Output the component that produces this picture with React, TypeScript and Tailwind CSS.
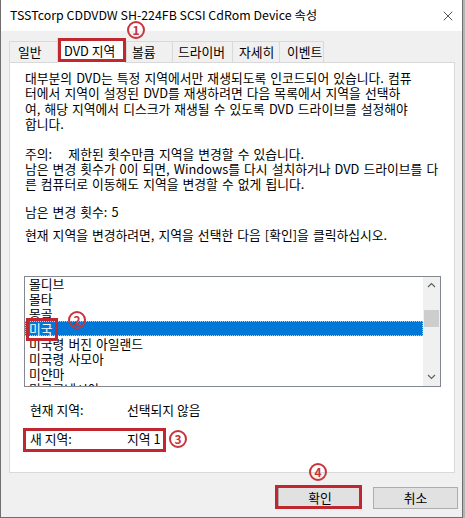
import { X } from 'lucide-react';

// Korean region list shown in the listbox
const regions = [
  '몰디브',
  '몰타',
  '몽골',
  '미국',
  '미국령 버진 아일랜드',
  '미국령 사모아',
  '미얀마',
  '미크로네시아',
];

const tabs = [
  { label: '일반', w: 'w-[48px]', pl: 'pl-[8px]' },
  { label: 'DVD 지역', w: 'w-[69px]', pl: 'pl-[6px]', active: true },
  { label: '볼륨', w: 'w-[46px]', pl: 'pl-[5px]' },
  { label: '드라이버', w: 'w-[60px]', pl: 'pl-[5px]' },
  { label: '자세히', w: 'w-[47px]', pl: 'pl-[6px]' },
  { label: '이벤트', w: 'w-[45px]', pl: 'pl-[7px]' },
];

function Badge({ n, className }: { n: string; className: string }) {
  return (
    <span
      className={`absolute flex items-center justify-center w-[18px] h-[18px] rounded-full border-2 border-[#c8343b] text-[#c8343b] text-[12px] font-bold leading-none ${className}`}
    >
      {n}
    </span>
  );
}

export default function App() {
  return (
    <div className="w-[465px] h-[518px] bg-[#b4b4b4] font-['Noto_Sans_CJK_KR',sans-serif] text-[12.8px] text-black">
      <div className="relative w-[463px] h-[518px] border-x border-b border-[#6e6e6e] bg-[#f0f0f0] flex flex-col">
        {/* Title bar */}
        <div className="h-[31px] bg-white flex items-center justify-between pl-[9px] pr-[6px]">
          <span className="whitespace-nowrap text-[12.4px]">TSSTcorp CDDVDW SH-224FB SCSI CdRom Device 속성</span>
          <X size={16} strokeWidth={1} className="text-black" />
        </div>

        <div className="px-[8px]">
          {/* Tabs */}
          <div className="mt-[7px] h-[24px] flex items-end relative z-10">
            {tabs.map((t) =>
              t.active ? (
                <div
                  key={t.label}
                  className={`${t.w} ${t.pl} h-[25px] -mb-px bg-white border-x border-t border-[#d9d9d9] flex items-center whitespace-nowrap`}
                >
                  {t.label}
                </div>
              ) : (
                <div
                  key={t.label}
                  className={`${t.w} ${t.pl} h-[21px] bg-[#f0f0f0] border-l border-t last:border-r border-[#d9d9d9] flex items-center whitespace-nowrap`}
                >
                  {t.label}
                </div>
              )
            )}
          </div>

          {/* Panel */}
          <div className="w-[446px] h-[411px] bg-white border border-[#d9d9d9] pt-[7px] pl-[15px] leading-[15.4px]">
            <div className="whitespace-nowrap [word-spacing:1.2px]">
              <div>대부분의 DVD는 특정 지역에서만 재생되도록 인코드되어 있습니다. 컴퓨</div>
              <div>터에서 지역이 설정된 DVD를 재생하려면 다음 목록에서 지역을 선택하</div>
              <div>여, 해당 지역에서 디스크가 재생될 수 있도록 DVD 드라이브를 설정해야</div>
              <div>합니다.</div>
            </div>
            <div className="whitespace-nowrap mt-[14px] [word-spacing:1.2px]">
              <div>주의:&nbsp;&nbsp;&nbsp;&nbsp;제한된 횟수만큼 지역을 변경할 수 있습니다.</div>
              <div>남은 변경 횟수가 0이 되면, Windows를 다시 설치하거나 DVD 드라이브를 다</div>
              <div>른 컴퓨터로 이동해도 지역을 변경할 수 없게 됩니다.</div>
            </div>
            <div className="mt-[12px] whitespace-nowrap [word-spacing:1.2px]">남은 변경 횟수: 5</div>
            <div className="mt-[8px] whitespace-nowrap [word-spacing:1.2px]">현재 지역을 변경하려면, 지역을 선택한 다음 [확인]을 클릭하십시오.</div>

            {/* Listbox */}
            <div className="mt-[33px] -ml-px w-[417px] h-[111px] border border-[#828790] flex leading-[15px]">
              <div className="flex-1 overflow-hidden">
                <div className="-mt-px">
                  {regions.map((r) =>
                    r === '미국' ? (
                      <div
                        key={r}
                        className="h-[15px] pl-[3px] bg-[#0078d7] text-white border border-dotted border-[#a8d0f2] leading-[13px] whitespace-nowrap"
                      >
                        {r}
                      </div>
                    ) : (
                      <div key={r} className="h-[15px] pl-[4px] whitespace-nowrap [word-spacing:1.2px]">
                        {r}
                      </div>
                    )
                  )}
                </div>
              </div>
              <div className="w-[17px] bg-[#f0f0f0] flex flex-col">
                <div className="h-[17px] flex items-center justify-center">
                  <svg width="9" height="6" viewBox="0 0 9 6">
                    <polyline points="1,5 4.5,1.5 8,5" fill="none" stroke="#606060" strokeWidth="1.2" />
                  </svg>
                </div>
                <div className="flex-1 pt-[16px] px-[1px]">
                  <div className="h-[17px] bg-[#cdcdcd]" />
                </div>
                <div className="h-[17px] flex items-center justify-center">
                  <svg width="9" height="6" viewBox="0 0 9 6">
                    <polyline points="1,1 4.5,4.5 8,1" fill="none" stroke="#606060" strokeWidth="1.2" />
                  </svg>
                </div>
              </div>
            </div>

            {/* Region info */}
            <div className="ml-[5px] mt-[15px] leading-[16px]">
              <div className="flex whitespace-nowrap">
                <span className="w-[97px]">현재 지역:</span>
                <span>선택되지 않음</span>
              </div>
              <div className="flex whitespace-nowrap mt-[13px]">
                <span className="w-[97px]">새 지역:</span>
                <span>지역 1</span>
              </div>
            </div>
          </div>
        </div>

        {/* Buttons */}
        <div className="mt-[14px] flex justify-end gap-[11px] pr-[4px]">
          <button className="w-[84px] h-[22px] bg-[#e1e1e1] border border-[#adadad] flex items-center justify-center">
            확인
          </button>
          <button className="w-[85px] h-[22px] bg-[#e1e1e1] border border-[#adadad] flex items-center justify-center">
            취소
          </button>
        </div>

        {/* Annotations */}
        <div className="absolute left-[57px] top-[38px] w-[68px] h-[24px] border-[3px] border-[#c1272e] z-20" />
        <Badge n="1" className="left-[126px] top-[21px] z-20" />
        <div className="absolute left-[25px] top-[318px] w-[32px] h-[23px] border-[3px] border-[#c1272e] z-20" />
        <Badge n="2" className="left-[67px] top-[311px] z-20" />
        <div className="absolute left-[22px] top-[428px] w-[143px] h-[24px] border-[3px] border-[#c1272e] z-20" />
        <Badge n="3" className="left-[168px] top-[430px] z-20" />
        <Badge n="4" className="left-[308px] top-[463px] z-20" />
        <div className="absolute left-[274px] top-[485px] w-[87px] h-[24px] border-[3px] border-[#c1272e] z-20" />
      </div>
    </div>
  );
}
